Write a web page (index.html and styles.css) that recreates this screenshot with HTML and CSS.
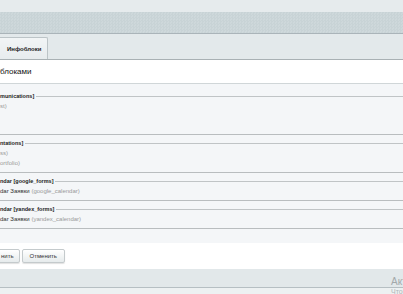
FILE: index.html
```html
<!DOCTYPE html>
<html lang="ru">
<head>
<meta charset="utf-8">
<title>Доступ к инфоблокам</title>
<link rel="stylesheet" href="styles.css">
</head>
<body>
<div class="page">
  <div class="topstrip"></div>
  <div class="band"></div>
  <div class="tabbar"><div class="tab">Инфоблоки</div></div>
  <div class="title">блоками</div>
  <div class="content">
    <div class="fs">
      <div class="legend"><span>munications]</span><i></i></div>
      <div class="item"><span class="code">st)</span></div>
      <div class="blank"></div>
    </div>
    <div class="fs">
      <div class="legend"><span>ntations]</span><i></i></div>
      <div class="item"><span class="code">ss)</span></div>
      <div class="item"><span class="code">ortfolio)</span></div>
    </div>
    <div class="fs">
      <div class="legend"><span>ndar [google_forms]</span><i></i></div>
      <div class="item">dar Заявки <span class="code">(google_calendar)</span></div>
    </div>
    <div class="fs">
      <div class="legend"><span>ndar [yandex_forms]</span><i></i></div>
      <div class="item">dar Заявки <span class="code">(yandex_calendar)</span></div>
    </div>
  </div>
  <div class="actions">
    <button class="btn btn-save">нить</button>
    <button class="btn">Отменить</button>
  </div>
  <div class="footer"></div>
  <div class="footer-bottom"></div>
  <div class="watermark">
    <div class="wm1">Активация Windows</div>
    <div class="wm2">Чтобы активировать Windows, перейдите</div>
  </div>
</div>
</body>
</html>
```
FILE: styles.css
```css
html, body {
  margin: 0;
  padding: 0;
}
body {
  font-family: "Liberation Sans", Arial, sans-serif;
  background: #fff;
  width: 403px;
  height: 294px;
  overflow: hidden;
}
.page {
  position: relative;
  width: 403px;
  height: 294px;
  overflow: hidden;
}
.topstrip {
  height: 12px;
  background: #e6ebed;
}
.band {
  height: 21px;
  background: repeating-conic-gradient(#c8d3d6 0 25%, #ced8db 0 50%) 0 0 / 3px 3px;
  border-bottom: 1px solid #aab4b9;
}
.tabbar {
  height: 25px;
  background: #e3e9eb;
  border-bottom: 1px solid #a9b1b4;
  display: flex;
  align-items: flex-end;
}
.tab {
  height: 22px;
  line-height: 22px;
  margin-left: -4px;
  padding: 0 6px 0 10px;
  border: 1px solid #bcc4c7;
  border-bottom: none;
  border-radius: 2px 2px 0 0;
  background: linear-gradient(#f2f5f6, #e7ecee);
  font-size: 6px;
  font-weight: bold;
  color: #222;
  box-sizing: border-box;
}
.title {
  height: 23px;
  line-height: 23px;
  font-size: 8px;
  color: #111;
  background: #fff;
  border-bottom: 1px solid #d0d6d8;
}
.content {
  background: #f4f6f8;
  padding: 7px 0 14px;
}
.fs {
  padding-bottom: 4px;
  border-bottom: 1px solid #b9bdbf;
}
.fs + .fs {
  margin-top: 3px;
}
.legend {
  height: 10px;
  display: flex;
  align-items: flex-start;
}
.legend span {
  font-size: 5.5px;
  font-weight: bold;
  line-height: 10px;
  color: #222;
  white-space: nowrap;
}
.legend i {
  flex: 1;
  height: 1px;
  margin-top: 5px;
  margin-left: 2px;
  background: #c0c4c6;
}
.item {
  height: 10px;
  line-height: 10px;
  font-size: 6px;
  color: #333;
  white-space: nowrap;
}
.code {
  color: #9a9a9a;
}
.blank {
  height: 19px;
}
.actions {
  height: 26px;
  box-sizing: border-box;
  padding-top: 6px;
  background: #fff;
  display: flex;
  align-items: flex-start;
  gap: 2px;
}
.btn {
  height: 14px;
  margin: 0;
  padding: 0 7px;
  font-family: "Liberation Sans", Arial, sans-serif;
  font-size: 6px;
  color: #333;
  border: 1px solid #c4cacc;
  border-radius: 2px;
  background: linear-gradient(#ffffff, #e6ebec);
  box-shadow: 0 1px 1px rgba(0, 0, 0, 0.12);
  line-height: 12px;
}
.btn-save {
  margin-left: -3px;
  padding: 0 5px 0 3px;
}
.footer {
  height: 18px;
  background: #e2e8ea;
  border-bottom: 1px solid #b6bfc3;
}
.footer-bottom {
  height: 6px;
  background: #edf1f2;
}
.watermark {
  position: absolute;
  left: 391px;
  top: 276px;
  white-space: nowrap;
  color: #a3a9ab;
}
.wm1 {
  font-size: 10px;
  line-height: 12px;
}
.wm2 {
  font-size: 7px;
  line-height: 8px;
  color: #b0b5b7;
}
```
